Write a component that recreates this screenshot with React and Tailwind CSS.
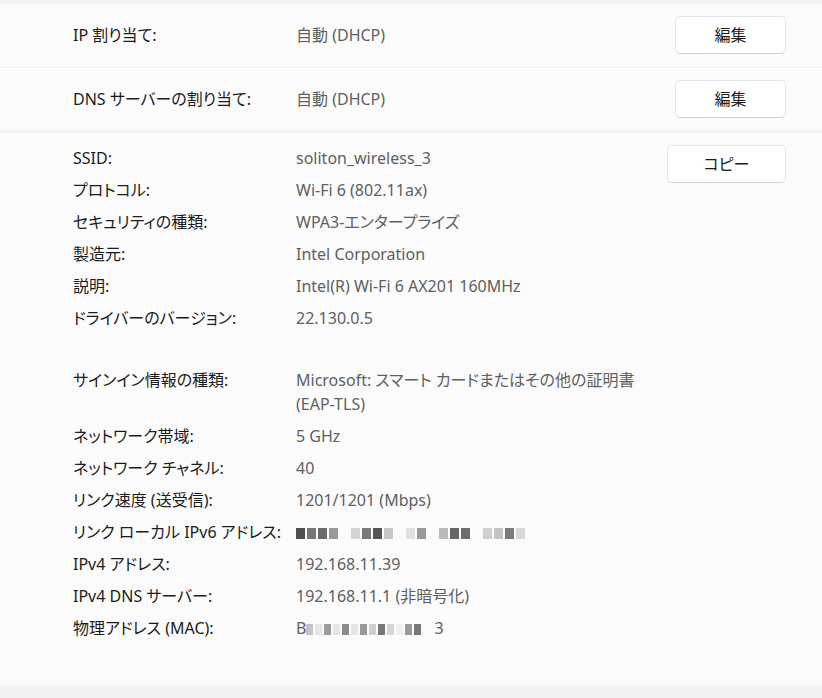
import React from 'react';

const font = { fontFamily: '"Noto Sans", "Noto Sans CJK JP", sans-serif' };

const EditRow = ({ label, value }) => (
  <div className="flex h-[62px] items-center bg-[#fbfbfb] pl-[73px] pr-[36px]">
    <div className="w-[223px] text-[#1b1b1b]">{label}</div>
    <div className="flex-1 text-[#5f5f5f]">{value}</div>
    <button className="h-[38px] w-[111px] rounded-[5px] border border-[#e5e5e5] border-b-[#d2d2d2] bg-white text-[#1b1b1b]">
      編集
    </button>
  </div>
);

// pixelated (redacted) address
const Blur = ({ cells, w = 'w-[9px]' }) => (
  <span className="inline-flex items-end gap-[2px] align-middle">
    {cells.map((c, i) => (
      <span key={i} className={`inline-block h-[11px] ${w}`} style={{ background: c }} />
    ))}
  </span>
);

const details1 = [
  ['SSID:', 'soliton_wireless_3'],
  ['プロトコル:', 'Wi-Fi 6 (802.11ax)'],
  ['セキュリティの種類:', 'WPA3-エンタープライズ'],
  ['製造元:', 'Intel Corporation'],
  ['説明:', 'Intel(R) Wi-Fi 6 AX201 160MHz'],
  ['ドライバーのバージョン:', '22.130.0.5'],
];

const ipv6 = ['#4f4f4f', '#777', '#6a6a6a', '#999', 'transparent', '#d4d4d4', '#7a7a7a', '#555', '#c8c8c8', 'transparent', '#e0e0e0', '#9a9a9a', 'transparent', '#bbb', '#666', '#6d6d6d', 'transparent', '#d0d0d0', '#c4c4c4', '#7c7c7c', '#d8d8d8'];
const mac = ['#c4c4c4', '#e6e6e6', '#9c9c9c', '#e6e6e6', '#8c8c8c', '#e6e6e6', '#9a9a9a', '#cfcfcf', '#777', '#d6d6d6', '#efefef', '#9a9a9a', '#777', 'transparent'];

const details2 = [
  ['サインイン情報の種類:', <>Microsoft: スマート カードまたはその他の証明書<br />(EAP-TLS)</>],
  ['ネットワーク帯域:', '5 GHz'],
  ['ネットワーク チャネル:', '40'],
  ['リンク速度 (送受信):', '1201/1201 (Mbps)'],
  ['リンク ローカル IPv6 アドレス:', <Blur cells={ipv6} />],
  ['IPv4 アドレス:', '192.168.11.39'],
  ['IPv4 DNS サーバー:', '192.168.11.1 (非暗号化)'],
  ['物理アドレス (MAC):', <>B<Blur cells={mac} w="w-[7px]" /> 3</>],
];

const Rows = ({ items }) => (
  <div className="grid grid-cols-[223px_1fr] gap-y-[8px] leading-[24px]">
    {items.map(([k, v], i) => (
      <React.Fragment key={i}>
        <div className="text-[#1b1b1b]">{k}</div>
        <div className="text-[#5f5f5f]">{v}</div>
      </React.Fragment>
    ))}
  </div>
);

export default function App() {
  return (
    <div
      className="min-h-[698px] w-[822px] bg-[#f3f3f3] pt-[4px] text-[16px] [font-feature-settings:'palt']"
      style={font}
    >
      <EditRow label="IP 割り当て:" value="自動 (DHCP)" />
      <div className="h-[2px]" />
      <EditRow label="DNS サーバーの割り当て:" value="自動 (DHCP)" />
      <div className="h-[3px]" />
      <div className="flex bg-[#fbfbfb] pb-[45px] pl-[73px] pr-[36px] pt-[13px]">
        <div className="flex flex-1 flex-col gap-[38px]">
          <Rows items={details1} />
          <Rows items={details2} />
        </div>
        <div>
          <button className="-mt-[1px] h-[38px] w-[119px] rounded-[5px] border border-[#e5e5e5] border-b-[#d2d2d2] bg-white text-[#1b1b1b]">
            コピー
          </button>
        </div>
      </div>
    </div>
  );
}
